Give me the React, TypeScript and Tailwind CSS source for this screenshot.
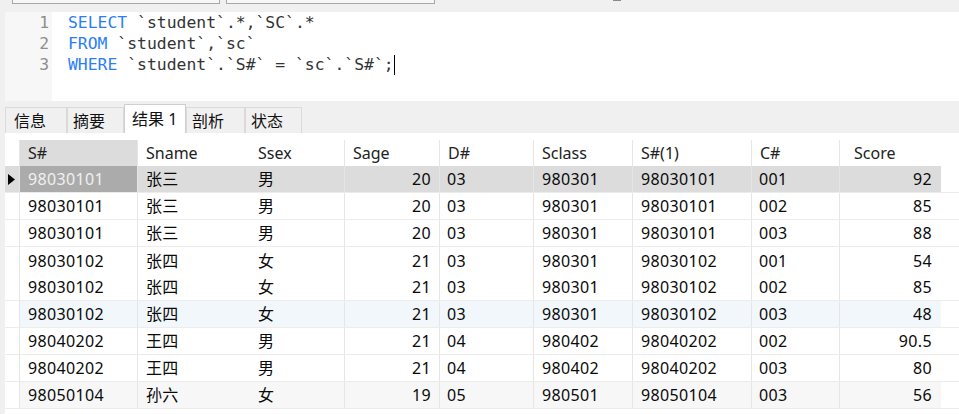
import React from "react"

const MONO = { fontFamily: '"DejaVu Sans Mono", "Liberation Mono", monospace' }
const UI = { fontFamily: '"Noto Sans", "Noto Sans CJK SC", sans-serif' }

interface Col {
  name:  string
  width: string
  right?: boolean
  line:  boolean
  pad:   string
}

const COLS: Col[] = [
  { name: "S#",     width: "w-[118px]", line: true,  pad: "pl-[8px]" },
  { name: "Sname",  width: "w-[112px]", line: false, pad: "pl-[8px]" },
  { name: "Ssex",   width: "w-[95px]",  line: true,  pad: "pl-[8px]" },
  { name: "Sage",   width: "w-[95px]",  line: true,  pad: "pl-[8px] pr-[8px]", right: true },
  { name: "D#",     width: "w-[94px]",  line: true,  pad: "pl-[7px]" },
  { name: "Sclass", width: "w-[99px]",  line: true,  pad: "pl-[8px]" },
  { name: "S#(1)",  width: "w-[119px]", line: true,  pad: "pl-[8px]" },
  { name: "C#",     width: "w-[88px]",  line: true,  pad: "pl-[7px]" },
  { name: "Score",  width: "w-[101px]", line: false, pad: "pl-[14px] pr-[9px]", right: true },
]

const ROWS = [
  ["98030101", "张三", "男", "20", "03", "980301", "98030101", "001", "92"],
  ["98030101", "张三", "男", "20", "03", "980301", "98030101", "002", "85"],
  ["98030101", "张三", "男", "20", "03", "980301", "98030101", "003", "88"],
  ["98030102", "张四", "女", "21", "03", "980301", "98030102", "001", "54"],
  ["98030102", "张四", "女", "21", "03", "980301", "98030102", "002", "85"],
  ["98030102", "张四", "女", "21", "03", "980301", "98030102", "003", "48"],
  ["98040202", "王四", "男", "21", "04", "980402", "98040202", "002", "90.5"],
  ["98040202", "王四", "男", "21", "04", "980402", "98040202", "003", "80"],
  ["98050104", "孙六", "女", "19", "05", "980501", "98050104", "003", "56"],
]

const TABS = [
  { label: "信息",  w: "w-[62px]", pl: "pl-[8px]" },
  { label: "摘要",  w: "w-[57px]", pl: "pl-[5px]" },
  { label: "结果 1", w: "w-[62px]", pl: "pl-[7px]", active: true },
  { label: "剖析",  w: "w-[59px]", pl: "pl-[5px]" },
  { label: "状态",  w: "w-[57px]", pl: "pl-[5px]" },
]

function Kw({ children }: { children: React.ReactNode }) {
  return <span className="text-[#2b7ef7]">{children}</span>
}

export default function App() {
  return (
    <div className="w-[959px] h-[414px] overflow-hidden bg-[#f0f0f0] relative" style={UI}>
      {/* top toolbar remnants */}
      <div className="h-[12px] relative">
        <div className="absolute left-[12px] top-[-4px] w-[208px] h-[8px] bg-[#f7f7f7] border border-[#a8a8a8]" />
        <div className="absolute left-[226px] top-[-4px] w-[209px] h-[8px] bg-[#f7f7f7] border border-[#a8a8a8]" />
        <div className="absolute left-[613px] top-0 w-[8px] h-[1px] bg-[#8a8a8a]" />
      </div>

      {/* editor */}
      <div className="ml-[5px] h-[89px] flex bg-white">
        <div className="w-[47px] bg-[#f7f7f7] text-right pr-[3px] text-[#8e8e8e] text-[16.4px] leading-[21px]" style={MONO}>
          <div>1</div>
          <div>2</div>
          <div>3</div>
        </div>
        <div className="flex-1 pl-[16px] text-[#333] text-[16.4px] leading-[21px] whitespace-pre" style={MONO}>
          <div><Kw>SELECT</Kw> `student`.*,`SC`.*</div>
          <div><Kw>FROM</Kw> `student`,`sc`</div>
          <div className="flex items-center">
            <span><Kw>WHERE</Kw> `student`.`S#` = `sc`.`S#`;</span>
            <span className="inline-block w-px h-[20px] bg-black" />
          </div>
        </div>
      </div>

      {/* tabs */}
      <div className="h-[32px] flex items-end pl-[5px]">
        {TABS.map((t) => (
          <div key={t.label}
            className={`${t.w} ${t.pl} flex items-center text-[16px] text-[#111] border border-b-0 ${
              t.active ? "h-[29px] bg-white border-[#cfcfcf]" : "h-[26px] bg-[#f0f0f0] border-[#dadada]"}`}>
            {t.label}
          </div>
        ))}
      </div>

      {/* result grid */}
      <div className="ml-[5px] h-[281px] bg-white pt-[7px] text-[16px]">
        <div className="flex h-[26px]">
          <div className="w-[15px] border-r border-[#e6e6e6]" />
          {COLS.map((c, i) => (
            <div key={c.name}
              className={`${c.width} ${c.line ? "border-r border-[#e6e6e6]" : ""} pl-[8px] flex items-center text-[#222] ${
                i === 0 ? "bg-[#dcdcdc]" : ""} ${c.name === "Score" ? "pl-[14px]" : c.name === "C#" || c.name === "D#" ? "pl-[7px]" : ""}`}>
              {c.name}
            </div>
          ))}
        </div>
        {ROWS.map((r, ri) => {
          const sel = ri === 0
          const bg = sel ? "bg-[#dcdcdc]" : ri === 5 ? "bg-[#f2f7fc]" : ri === 8 ? "bg-[#f7f7f7]" : "bg-white"
          const lineB = ri === 3 ? "" : "border-b border-[#ececec]"
          return (
            <div key={ri} className={`flex h-[27px] ${lineB}`}>
              <div className={`w-[15px] border-r border-[#e6e6e6] flex items-center pl-[3px] ${sel ? "bg-[#dcdcdc]" : "bg-white"}`}>
                {sel && (
                  <svg width="7" height="11" viewBox="0 0 7 11"><path d="M0 0 L7 5.5 L0 11 Z" fill="#000" /></svg>
                )}
              </div>
              {r.map((v, ci) => {
                const c = COLS[ci]
                const cellBg = sel && ci === 0 ? "bg-[#ababab] text-[#f0f0f0]" : `${bg} text-[#0a0a0a]`
                return (
                  <div key={ci}
                    className={`${c.width} ${c.pad} ${c.line ? "border-r border-[#e6e6e6]" : ""} ${cellBg} flex items-center tracking-[0.35px] ${
                      c.right ? "justify-end" : ""} relative`}>
                    {v}
                    {ri === 3 && ci < 2 && <span className="absolute left-0 right-0 bottom-[-1px] h-px bg-[#ececec]" />}
                    {ri === 3 && ci === 2 && <span className="absolute left-0 w-[73px] bottom-[-1px] h-px bg-[#ececec]" />}
                  </div>
                )
              })}
            </div>
          )
        })}
      </div>
    </div>
  )
}
